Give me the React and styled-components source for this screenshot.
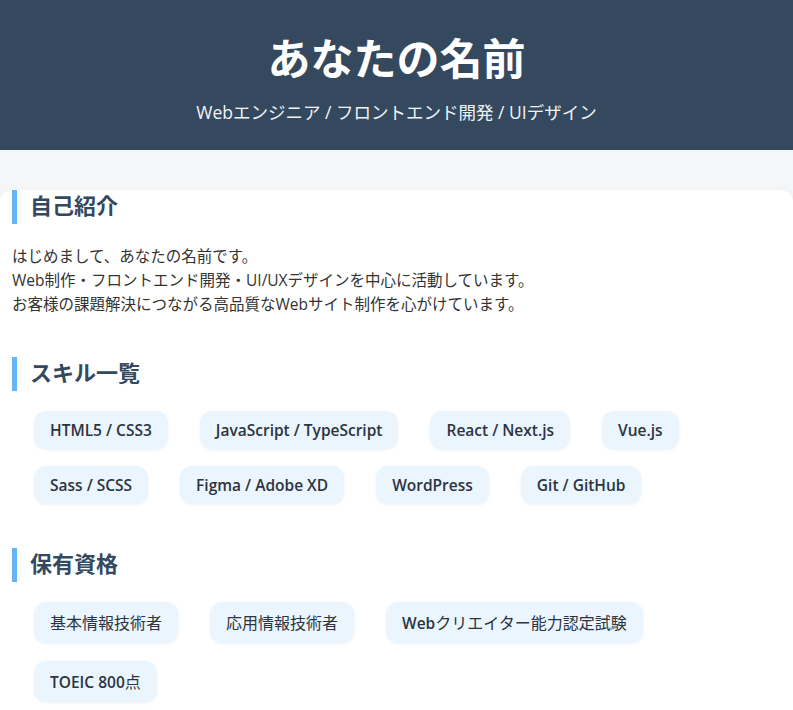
import React from "react";
import styled, { createGlobalStyle } from "styled-components";

const Global = createGlobalStyle`
  html, body { margin: 0; padding: 0; }
  body {
    background: #f5f6f8;
    font-family: "Open Sans", "Noto Sans CJK JP", sans-serif;
    color: #333;
  }
`;

const Header = styled.header`
  background: #34495e;
  color: #fff;
  text-align: center;
  padding: 30px 20px 25px;
  height: 150px;
  box-sizing: border-box;
`;

const Title = styled.h1`
  margin: 0 0 17px;
  font-family: "Noto Sans CJK JP", sans-serif;
  font-size: 43px;
  font-weight: 700;
  line-height: 52px;
`;

const Subtitle = styled.p`
  margin: 0;
  font-family: "Open Sans", "Noto Sans CJK JP", sans-serif;
  font-size: 17.5px;
  line-height: 26px;
  color: #f0f3f6;
`;

const Main = styled.main`
  padding-top: 40px;
`;

const Card = styled.div`
  background: #fff;
  border-radius: 12px;
  box-shadow: 0 2px 8px rgba(0, 0, 0, 0.05);
  padding: 0 12px 20px;
`;

const Section = styled.section`
  margin-bottom: 41px;
`;

const Heading = styled.h2`
  margin: 0 0 20px;
  border-left: 5px solid #64b5f6;
  padding: 0 0 6px 13px;
  font-family: "Noto Sans CJK JP", sans-serif;
  font-size: 22px;
  font-weight: 700;
  line-height: 28px;
  color: #34495e;
`;

const Paragraph = styled.p`
  margin: 0;
  font-family: "Open Sans", "Noto Sans CJK JP", sans-serif;
  font-size: 15.5px;
  line-height: 24px;
  color: #333;
`;

const TagList = styled.ul`
  list-style: none;
  margin: 0;
  padding: 0 0 3px 22px;
  display: flex;
  flex-wrap: wrap;
  gap: ${(p) => p.$rowGap}px 32px;
`;

const Tag = styled.li`
  background: #eaf5fe;
  border-radius: 12px;
  padding: ${(p) => p.$padY}px 16px;
  font-size: 15.5px;
  line-height: 22px;
  font-weight: 400;
  color: #2c3440;
  box-shadow: 0 1px 3px rgba(100, 150, 200, 0.12);
  white-space: nowrap;
`;

const Latin = styled.span`
  font-family: "Open Sans", sans-serif;
  font-weight: 600;
`;

const Cjk = styled.span`
  font-family: "Noto Sans CJK JP", sans-serif;
  font-size: 16px;
  font-weight: 400;
`;

const skills = [
  "HTML5 / CSS3",
  "JavaScript / TypeScript",
  "React / Next.js",
  "Vue.js",
  "Sass / SCSS",
  "Figma / Adobe XD",
  "WordPress",
  "Git / GitHub",
];

const certs = ["基本情報技術者", "応用情報技術者", "Webクリエイター能力認定試験", "TOEIC 800点"];

const LATIN_RUN = /([A-Za-z0-9 \/.]+)/;
const LATIN_ONLY = /^[A-Za-z0-9 \/.]+$/;

function Mixed({ text }) {
  const parts = text.split(LATIN_RUN).filter(Boolean);
  return parts.map((p, i) =>
    LATIN_ONLY.test(p) ? <Latin key={i}>{p}</Latin> : <Cjk key={i}>{p}</Cjk>
  );
}

export default function App() {
  return (
    <>
      <Global />
      <Header>
        <Title>あなたの名前</Title>
        <Subtitle>Webエンジニア / フロントエンド開発 / UIデザイン</Subtitle>
      </Header>
      <Main>
        <Card>
          <Section>
            <Heading>自己紹介</Heading>
            <Paragraph>
              はじめまして、あなたの名前です。
              <br />
              Web制作・フロントエンド開発・UI/UXデザインを中心に活動しています。
              <br />
              お客様の課題解決につながる高品質なWebサイト制作を心がけています。
            </Paragraph>
          </Section>
          <Section>
            <Heading>スキル一覧</Heading>
            <TagList $rowGap={17}>
              {skills.map((s) => (
                <Tag key={s} $padY={8}>
                  <Mixed text={s} />
                </Tag>
              ))}
            </TagList>
          </Section>
          <Section>
            <Heading>保有資格</Heading>
            <TagList $rowGap={18}>
              {certs.map((s) => (
                <Tag key={s} $padY={9}>
                  <Mixed text={s} />
                </Tag>
              ))}
            </TagList>
          </Section>
        </Card>
      </Main>
    </>
  );
}
